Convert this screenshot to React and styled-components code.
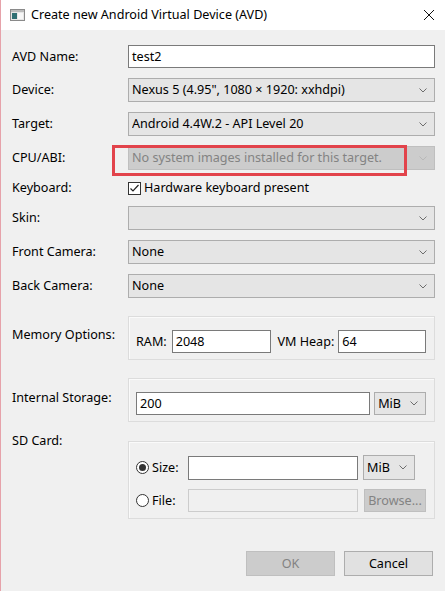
import React from 'react';
import styled, { createGlobalStyle } from 'styled-components';

const GlobalStyle = createGlobalStyle`
  html, body {
    margin: 0;
    padding: 0;
    background: #f0f0f0;
  }
  body {
    font-family: "Noto Sans", "Liberation Sans", "Noto Sans CJK SC", sans-serif;
    font-size: 12.6px;
    color: #000;
  }
`;

const Window = styled.div`
  position: relative;
  width: 444px;
  height: 591px;
  border-left: 1px solid #e6a2aa;
  background: #f0f0f0;
  overflow: hidden;
`;

const TitleBar = styled.div`
  height: 30px;
  background: #fff;
  display: flex;
  align-items: center;
  padding: 0 8px 0 9px;
  gap: 6px;
`;

const Title = styled.div`
  flex: 1;
  line-height: 16px;
  padding-bottom: 1px;
`;

const CloseBtn = styled.div`
  width: 12px;
  height: 12px;
  display: flex;
  margin-right: 2px;
`;

const Body = styled.div`
  padding: 15px 10px 0 11px;
`;

const Form = styled.div`
  display: grid;
  grid-template-columns: 116px 307px;
  row-gap: 10px;
  align-items: center;
`;

const Label = styled.div`
  line-height: 16px;
  white-space: nowrap;
  padding-top: ${(p) => p.$top || 0}px;
`;

const TextInput = styled.div`
  box-sizing: border-box;
  height: ${(p) => p.$h || 23}px;
  width: ${(p) => (p.$w ? `${p.$w}px` : '100%')};
  background: ${(p) => (p.$disabled ? '#f0f0f0' : '#fff')};
  border: 1px solid ${(p) => (p.$disabled ? '#cccccc' : '#7a7a7a')};
  display: flex;
  align-items: center;
  padding-left: 3px;
  line-height: 16px;
`;

const SelectBox = styled.div`
  box-sizing: border-box;
  height: ${(p) => p.$h || 24}px;
  width: ${(p) => (p.$w ? `${p.$w}px` : '100%')};
  background: ${(p) => (p.$disabled ? '#cccccc' : '#e5e5e5')};
  border: 1px solid ${(p) => (p.$disabled ? '#bfbfbf' : '#adadad')};
  color: ${(p) => (p.$disabled ? '#838383' : '#000')};
  display: flex;
  align-items: center;
  padding: 0 7px 0 3px;
  line-height: 16px;
`;

const SelectText = styled.span`
  flex: 1;
  white-space: nowrap;
  overflow: hidden;
`;

const Chevron = ({ color = '#6d6d6d' }) => (
  <svg width="8" height="5" viewBox="0 0 8 5">
    <polyline points="0.5,0.5 4,4 7.5,0.5" fill="none" stroke={color} strokeWidth="1" />
  </svg>
);

const Select = ({ value, w, h, disabled }) => (
  <SelectBox $w={w} $h={h} $disabled={disabled}>
    <SelectText>{value}</SelectText>
    <Chevron color={disabled ? '#b8b8b8' : '#6d6d6d'} />
  </SelectBox>
);

const CheckRow = styled.div`
  display: flex;
  align-items: center;
  gap: 3px;
  height: 16px;
  line-height: 16px;
`;

const CheckBox = styled.div`
  box-sizing: border-box;
  width: 13px;
  height: 13px;
  border: 1px solid #333;
  background: #fff;
  display: flex;
  align-items: center;
  justify-content: center;
`;

const Annotation = styled.div`
  position: absolute;
  left: 111px;
  top: 145px;
  width: 295px;
  height: 31px;
  box-sizing: border-box;
  border: 3px solid #e2434b;
  pointer-events: none;
`;

const GroupRow = styled.div`
  display: grid;
  grid-template-columns: 116px 307px;
  align-items: start;
  margin-top: ${(p) => p.$mt || 0}px;
`;

const Group = styled.div`
  box-sizing: border-box;
  border: 1px solid #dcdcdc;
  box-shadow: inset 1px 1px 0 #fafafa;
  padding: 13px 8px 6px 7px;
  margin-top: ${(p) => p.$mt || 0}px;
  display: flex;
  flex-direction: ${(p) => (p.$column ? 'column' : 'row')};
  align-items: ${(p) => (p.$column ? 'stretch' : 'center')};
  gap: ${(p) => p.$gap || 0}px;
`;

const InlineLabel = styled.span`
  line-height: 16px;
  margin: 0 ${(p) => p.$mr || 5}px 0 ${(p) => p.$ml || 0}px;
  white-space: nowrap;
`;

const LineRow = styled.div`
  display: flex;
  align-items: center;
`;

const RadioLabel = styled.div`
  width: 52px;
  display: flex;
  align-items: center;
  gap: 3px;
  line-height: 16px;
`;

const RadioCircle = styled.div`
  box-sizing: border-box;
  width: 13px;
  height: 13px;
  border-radius: 50%;
  border: 1px solid #333;
  background: #fff;
  display: flex;
  align-items: center;
  justify-content: center;
  &::after {
    content: '';
    width: 7px;
    height: 7px;
    border-radius: 50%;
    background: ${(p) => (p.$checked ? '#333' : 'transparent')};
  }
`;

const Button = styled.div`
  box-sizing: border-box;
  width: ${(p) => p.$w || 89}px;
  height: ${(p) => p.$h || 25}px;
  background: ${(p) => (p.$disabled ? '#cccccc' : '#e1e1e1')};
  border: 1px solid ${(p) => (p.$disabled ? '#bfbfbf' : '#adadad')};
  color: ${(p) => (p.$disabled ? '#838383' : '#000')};
  display: flex;
  align-items: center;
  justify-content: center;
  line-height: 16px;
  margin-left: ${(p) => p.$ml || 0}px;
`;

const ButtonBar = styled.div`
  display: flex;
  justify-content: flex-end;
  gap: 9px;
  margin: 32px 2px 0 0;
`;

const AppIcon = () => (
  <svg width="15" height="12" viewBox="0 0 15 12">
    <rect x="0.5" y="0.5" width="14" height="11" fill="#e6e6e6" stroke="#8a8a8a" />
    <rect x="1" y="1" width="13" height="2" fill="#bcbcbc" />
    <rect x="2" y="4" width="5" height="6" fill="#2f6f73" />
    <rect x="8" y="4" width="5" height="6" fill="#f7f7f7" />
  </svg>
);

export default function App() {
  return (
    <>
      <GlobalStyle />
      <Window>
        <TitleBar>
          <AppIcon />
          <Title>Create new Android Virtual Device (AVD)</Title>
          <CloseBtn>
            <svg width="12" height="12" viewBox="0 0 12 12">
              <path d="M1 1 L11 11 M11 1 L1 11" stroke="#111" strokeWidth="1" />
            </svg>
          </CloseBtn>
        </TitleBar>
        <Body>
          <Form>
            <Label>AVD Name:</Label>
            <TextInput $h={23}>test2</TextInput>

            <Label>Device:</Label>
            <Select value={'Nexus 5 (4.95", 1080 \u00d7 1920: xxhdpi)'} />

            <Label>Target:</Label>
            <Select value="Android 4.4W.2 - API Level 20" />

            <Label>CPU/ABI:</Label>
            <Select value="No system images installed for this target." disabled />

            <Label>Keyboard:</Label>
            <CheckRow>
              <CheckBox>
                <svg width="11" height="11" viewBox="0 0 11 11">
                  <polyline points="1.5,5.5 4,8 9.5,2" fill="none" stroke="#222" strokeWidth="1.2" />
                </svg>
              </CheckBox>
              Hardware keyboard present
            </CheckRow>

            <Label>Skin:</Label>
            <Select value="" />

            <Label>Front Camera:</Label>
            <Select value="None" />

            <Label>Back Camera:</Label>
            <Select value="None" />
          </Form>

          <GroupRow $mt={18}>
            <Label $top={11}>Memory Options:</Label>
            <Group>
              <InlineLabel $mr={5}>RAM:</InlineLabel>
              <TextInput $w={100}>2048</TextInput>
              <InlineLabel $ml={6} $mr={4}>VM Heap:</InlineLabel>
              <TextInput $w={88}>64</TextInput>
            </Group>
          </GroupRow>

          <GroupRow $mt={18}>
            <Label $top={12}>Internal Storage:</Label>
            <Group>
              <TextInput $w={235}>200</TextInput>
              <div style={{ width: 4 }} />
              <Select value="MiB" w={52} h={23} />
            </Group>
          </GroupRow>

          <GroupRow $mt={11}>
            <Label>SD Card:</Label>
            <Group $column $gap={9} $mt={8}>
              <LineRow>
                <RadioLabel>
                  <RadioCircle $checked />
                  Size:
                </RadioLabel>
                <TextInput $w={170} $h={24} />
                <div style={{ width: 5 }} />
                <Select value="MiB" w={52} h={25} />
              </LineRow>
              <LineRow>
                <RadioLabel>
                  <RadioCircle />
                  File:
                </RadioLabel>
                <TextInput $w={170} $disabled />
                <Button $w={62} $h={23} $ml={6} $disabled>
                  Browse...
                </Button>
              </LineRow>
            </Group>
          </GroupRow>

          <ButtonBar>
            <Button $disabled>OK</Button>
            <Button>Cancel</Button>
          </ButtonBar>
        </Body>
        <Annotation />
      </Window>
    </>
  );
}
